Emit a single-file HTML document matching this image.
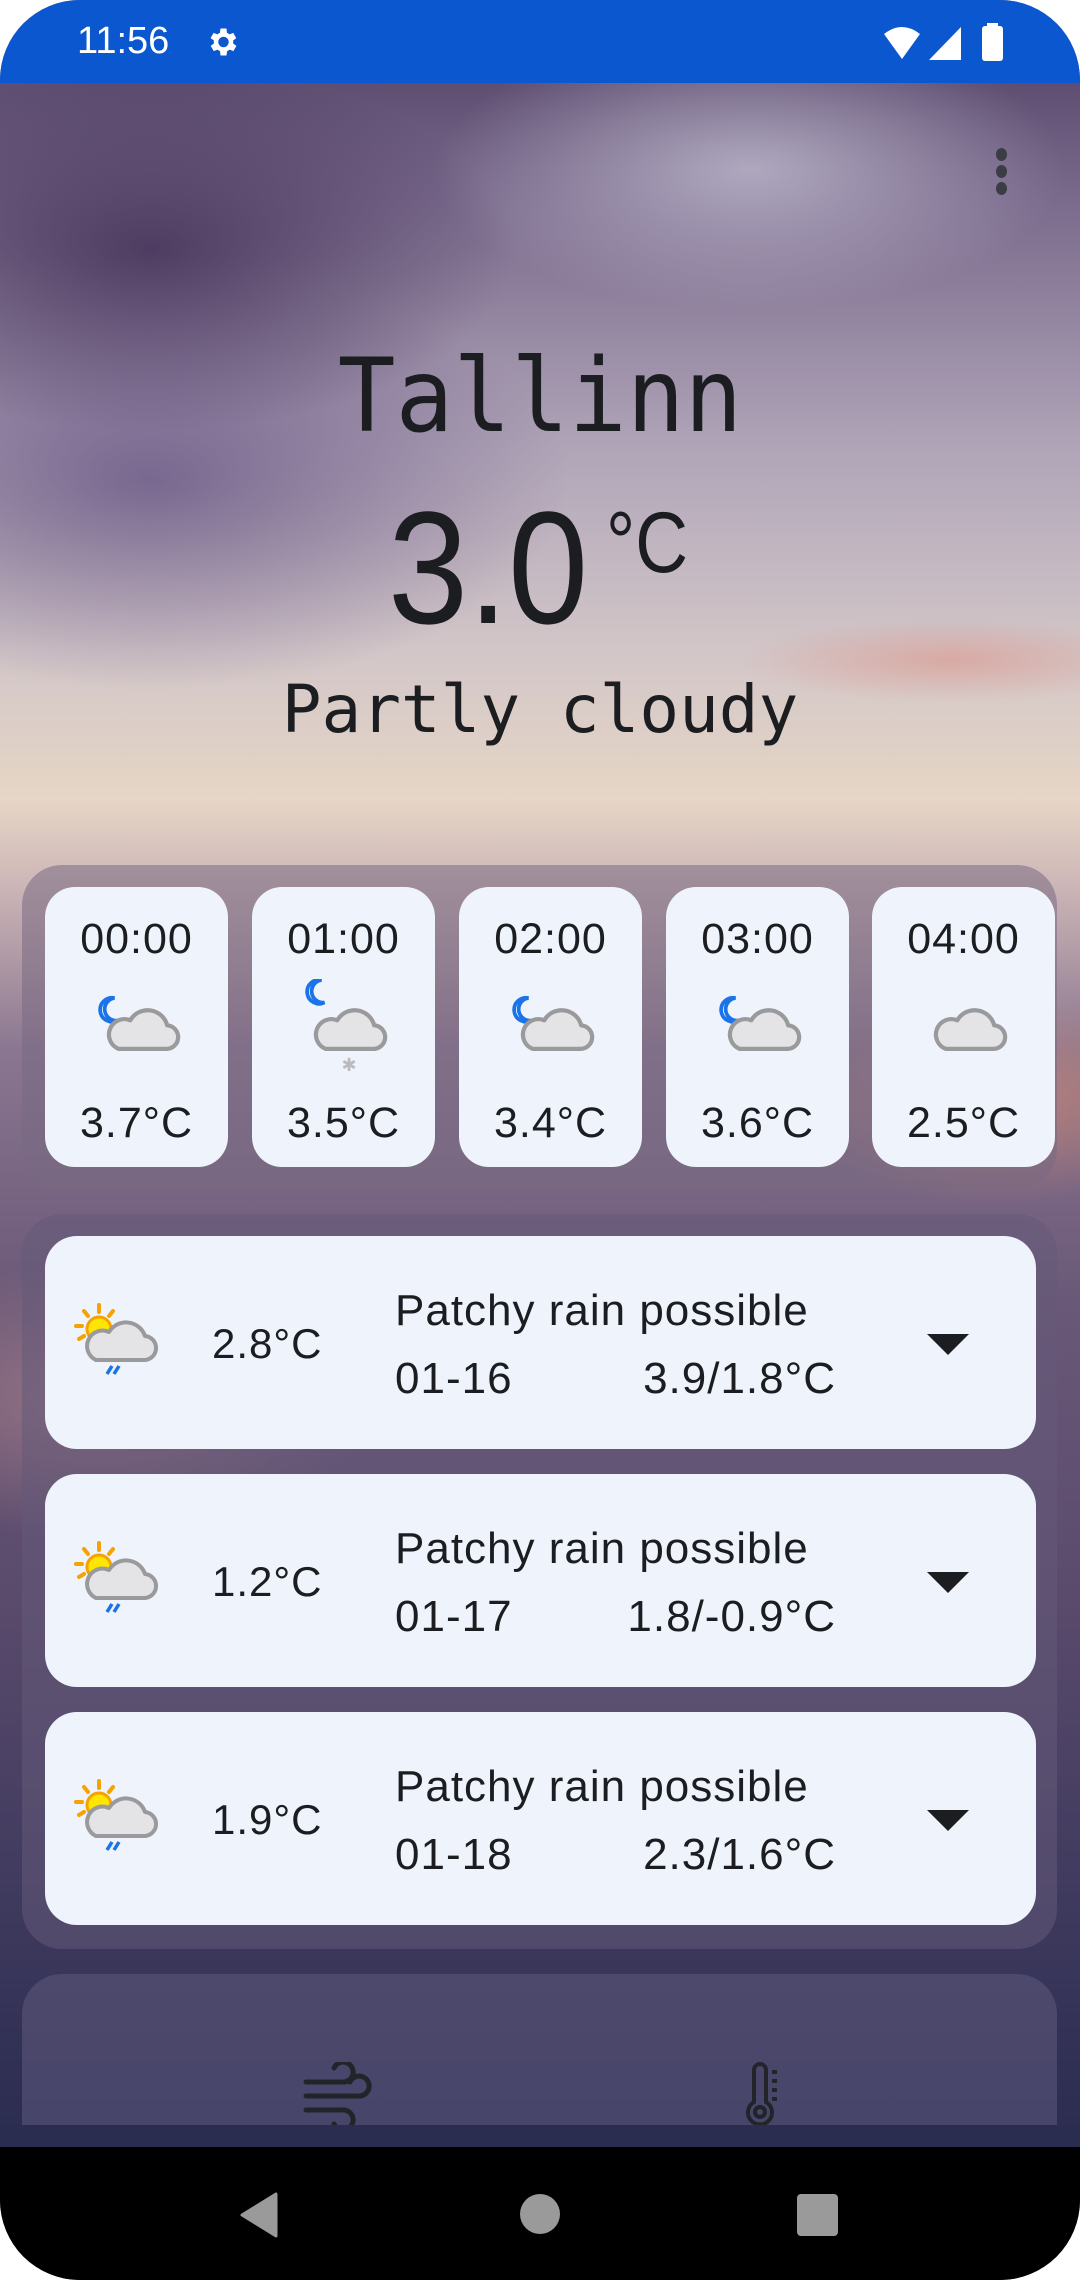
<!DOCTYPE html>
<html><head><meta charset="utf-8">
<style>
*{margin:0;padding:0;box-sizing:border-box}
html,body{width:1080px;height:2280px;background:#fff;overflow:hidden}
body{position:relative;font-family:"Liberation Sans",sans-serif;color:#1b1d20}
.screen{position:absolute;left:0;top:0;width:1080px;height:2280px;border-radius:80px;overflow:hidden;
background:
radial-gradient(ellipse 520px 260px at 150px 250px,rgba(60,40,80,.75),rgba(60,40,80,0) 70%),
radial-gradient(ellipse 600px 300px at 150px 480px,rgba(95,75,125,.7),rgba(95,75,125,0) 70%),
radial-gradient(ellipse 450px 200px at 750px 170px,rgba(190,185,205,.8),rgba(190,185,205,0) 70%),
radial-gradient(ellipse 300px 60px at 950px 660px,rgba(220,150,140,.6),rgba(220,150,140,0) 70%),
radial-gradient(ellipse 400px 200px at 100px 1400px,rgba(200,150,150,.5),rgba(200,150,150,0) 70%),
radial-gradient(ellipse 300px 150px at 1000px 1100px,rgba(220,140,110,.6),rgba(220,140,110,0) 70%),
linear-gradient(180deg,#4a3a5e 0px,#7a6a8c 200px,#b0a5b8 450px,#d2c6c8 650px,#e6d6c6 800px,#cfb8b8 880px,#8a7690 1050px,#6a5878 1300px,#5a4a6c 1600px,#3e3a5e 1900px,#2a2c50 2140px);}
.status{position:absolute;left:0;top:0;width:1080px;height:83px;background:#0b57d0;color:#fff}
.nav{position:absolute;left:0;top:2147px;width:1080px;height:133px;background:#000}
.hc{position:absolute;top:887px;width:183px;height:280px;background:#eef3fc;border-radius:30px;text-align:center}
.hc .t{position:absolute;top:28px;width:100%;font-size:43px;letter-spacing:1px}
.hc svg{position:absolute;left:41px;top:92px}
.dc{position:absolute;left:45px;width:991px;height:213px;background:#eef3fc;border-radius:32px}
.dc .tp{position:absolute;left:167px;top:84px;font-size:42px;letter-spacing:1px}
.dc .d{position:absolute;left:350px;top:50px;font-size:44px;letter-spacing:1px}
.dc .dt{position:absolute;left:350px;top:118px;font-size:44px;letter-spacing:1px}
.dc .r{position:absolute;right:200px;top:118px;font-size:44px;letter-spacing:1px}
.dc .ar{position:absolute;left:882px;top:98px;width:0;height:0;border-left:21px solid transparent;border-right:21px solid transparent;border-top:21px solid #1b1d20}
.dc svg{position:absolute;left:26px;top:66px}
</style></head><body>
<svg width="0" height="0" style="position:absolute">
<defs>
<symbol id="cloud" viewBox="0 0 100 60"><path d="M22 56 H78 A14 14 0 0 0 80 28 A24 24 0 0 0 36 22 A17 17 0 0 0 22 56 Z" fill="#e4e4e6" stroke="#9a9a9c" stroke-width="5" stroke-linejoin="round"/></symbol>
<symbol id="moon" viewBox="0 0 40 40"><path d="M26 4 A16 16 0 1 0 30 34 A13 13 0 1 1 26 4 Z" fill="#fff" stroke="#1a73e8" stroke-width="5"/></symbol>
<symbol id="sunrain" viewBox="0 0 90 80">
<g stroke="#f5a300" stroke-width="4" stroke-linecap="round"><line x1="28" y1="3" x2="28" y2="10"/><line x1="13" y1="9" x2="17" y2="14"/><line x1="42" y1="9" x2="38" y2="14"/><line x1="5" y1="24" x2="11" y2="24"/><line x1="8" y1="37" x2="13" y2="34"/></g>
<circle cx="28" cy="27" r="12" fill="#ffe600" stroke="#f5a300" stroke-width="3"/>
<path d="M25 58 H72 A12 12 0 0 0 74 34 A20 20 0 0 0 38 30 A14 14 0 0 0 25 58 Z" fill="#e4e4e6" stroke="#9a9a9c" stroke-width="4" stroke-linejoin="round"/>
<g stroke="#1a73e8" stroke-width="3.5"><line x1="41" y1="64" x2="36" y2="72"/><line x1="48" y1="64" x2="43" y2="72"/></g>
</symbol>
</defs></svg>
<div class="screen">
<div class="status">
<div style="position:absolute;left:77px;top:20px;font-size:38px">11:56</div>
<svg style="position:absolute;left:204px;top:24px" width="36" height="36" viewBox="0 0 24 24"><path fill="#fff" d="M19.4 13a7.5 7.5 0 0 0 0-2l2.1-1.6-2-3.5-2.5 1a7 7 0 0 0-1.7-1L15 3h-4l-.4 2.9a7 7 0 0 0-1.7 1l-2.5-1-2 3.5L6.6 11a7.5 7.5 0 0 0 0 2l-2.1 1.6 2 3.5 2.5-1a7 7 0 0 0 1.7 1L11 21h4l.4-2.9a7 7 0 0 0 1.7-1l2.5 1 2-3.5zM13 15.5a3.5 3.5 0 1 1 0-7 3.5 3.5 0 0 1 0 7z"/></svg>
<svg style="position:absolute;left:882px;top:26px" width="40" height="34" viewBox="0 0 40 34"><path d="M2 8 Q20 -6 38 8 L20 33 Z" fill="#fff"/></svg>
<svg style="position:absolute;left:928px;top:26px" width="34" height="34" viewBox="0 0 34 34"><path d="M33 1 V34 H1 Z" fill="#fff"/></svg>
<div style="position:absolute;left:982px;top:26px;width:21px;height:35px;background:#fff;border-radius:3px"></div>
<div style="position:absolute;left:987px;top:23px;width:11px;height:5px;background:#fff"></div>
</div>
<div style="position:absolute;left:996px;top:148px">
<div style="width:11px;height:13px;border-radius:50%;background:#3a3e44;margin-bottom:4px"></div>
<div style="width:11px;height:13px;border-radius:50%;background:#3a3e44;margin-bottom:4px"></div>
<div style="width:11px;height:13px;border-radius:50%;background:#3a3e44"></div></div>
<div style="position:absolute;left:0;width:1080px;top:336px;text-align:center;font-family:'DejaVu Sans Mono',monospace;font-size:96px;line-height:120px;transform:scaleY(1.06)">Tallinn</div>
<div style="position:absolute;left:388px;top:478px;font-size:160px;line-height:180px;transform:scaleX(.9);transform-origin:left">3.0</div>
<div style="position:absolute;left:606px;top:493px;font-size:86px;line-height:100px;transform:scaleX(.85);transform-origin:left">°C</div>
<div style="position:absolute;left:0;width:1080px;top:665px;text-align:center;font-family:'DejaVu Sans Mono',monospace;font-size:66px;line-height:90px">Partly cloudy</div>

<div style="position:absolute;left:22px;top:865px;width:1035px;height:324px;border-radius:40px;background:rgba(120,105,130,.55)"></div>
<div class="hc" style="left:45px"><div class="t">00:00</div><svg width="100" height="100" viewBox="0 0 100 100"><use href="#moon" x="9" y="16" width="30" height="30"/><use href="#cloud" x="14" y="22" width="84" height="52"/></svg><div class="t" style="top:212px">3.7°C</div></div>
<div class="hc" style="left:252px"><div class="t">01:00</div><svg width="100" height="100" viewBox="0 0 100 100"><use href="#moon" x="9" y="-2" width="30" height="30"/><use href="#cloud" x="14" y="22" width="84" height="52"/><text x="56" y="92" font-size="18" fill="#bbb" text-anchor="middle">✱</text></svg><div class="t" style="top:212px">3.5°C</div></div>
<div class="hc" style="left:459px"><div class="t">02:00</div><svg width="100" height="100" viewBox="0 0 100 100"><use href="#moon" x="9" y="16" width="30" height="30"/><use href="#cloud" x="14" y="22" width="84" height="52"/></svg><div class="t" style="top:212px">3.4°C</div></div>
<div class="hc" style="left:666px"><div class="t">03:00</div><svg width="100" height="100" viewBox="0 0 100 100"><use href="#moon" x="9" y="16" width="30" height="30"/><use href="#cloud" x="14" y="22" width="84" height="52"/></svg><div class="t" style="top:212px">3.6°C</div></div>
<div class="hc" style="left:872px"><div class="t">04:00</div><svg width="100" height="100" viewBox="0 0 100 100"><use href="#cloud" x="14" y="22" width="84" height="52"/></svg><div class="t" style="top:212px">2.5°C</div></div>

<div style="position:absolute;left:22px;top:1214px;width:1035px;height:735px;border-radius:40px;background:rgba(100,90,120,.55)"></div>
<div class="dc" style="top:1236px"><svg width="90" height="80"><use href="#sunrain" width="90" height="80"/></svg><div class="tp">2.8°C</div><div class="d">Patchy rain possible</div><div class="dt">01-16</div><div class="r">3.9/1.8°C</div><div class="ar"></div></div>
<div class="dc" style="top:1474px"><svg width="90" height="80"><use href="#sunrain" width="90" height="80"/></svg><div class="tp">1.2°C</div><div class="d">Patchy rain possible</div><div class="dt">01-17</div><div class="r">1.8/-0.9°C</div><div class="ar"></div></div>
<div class="dc" style="top:1712px"><svg width="90" height="80"><use href="#sunrain" width="90" height="80"/></svg><div class="tp">1.9°C</div><div class="d">Patchy rain possible</div><div class="dt">01-18</div><div class="r">2.3/1.6°C</div><div class="ar"></div></div>

<div style="position:absolute;left:22px;top:1974px;width:1035px;height:152px;border-radius:40px 40px 0 0;background:rgba(95,90,125,.55)"></div>
<svg style="position:absolute;left:302px;top:2062px" width="70" height="64" viewBox="0 0 70 64"><g fill="none" stroke="#22242a" stroke-width="5" stroke-linecap="round"><path d="M4 20 H40 A10 10 0 1 0 32 6"/><path d="M4 34 H56 A10 10 0 1 0 48 20"/><path d="M4 48 H40 A10 10 0 1 1 32 62"/></g></svg>
<svg style="position:absolute;left:746px;top:2062px" width="44" height="66" viewBox="0 0 44 66"><g fill="none" stroke="#22242a" stroke-width="4"><path d="M8 40 V8 A6 6 0 0 1 20 8 V40 A12 12 0 1 1 8 40 Z"/><circle cx="14" cy="50" r="5"/></g><g fill="#22242a"><rect x="26" y="8" width="5" height="4"/><rect x="26" y="17" width="5" height="4"/><rect x="26" y="26" width="5" height="4"/><rect x="26" y="35" width="5" height="4"/></g></svg>
<div style="position:absolute;left:0;top:2125px;width:1080px;height:22px;background:#2a2c50"></div>
<div class="nav">
<svg style="position:absolute;left:238px;top:45px" width="42" height="46" viewBox="0 0 42 46"><path d="M38 2 V44 L4 23 Z" fill="#9a9a9a" stroke="#9a9a9a" stroke-width="3" stroke-linejoin="round"/></svg>
<div style="position:absolute;left:520px;top:47px;width:40px;height:40px;border-radius:50%;background:#9a9a9a"></div>
<div style="position:absolute;left:797px;top:47px;width:41px;height:42px;border-radius:4px;background:#9a9a9a"></div>
</div>
</div>
</body></html>
